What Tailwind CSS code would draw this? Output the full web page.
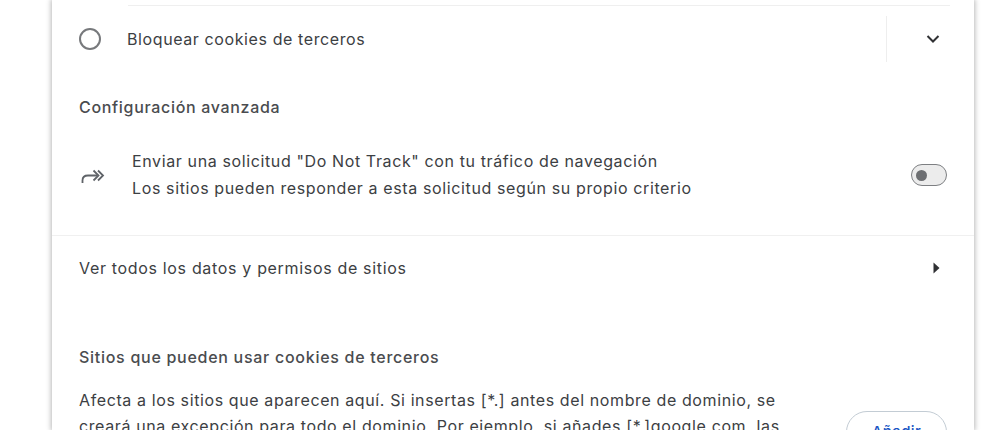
<!DOCTYPE html>
<html lang="es">
<head>
  <meta charset="UTF-8" />
  <title>Cookies de terceros</title>
  <script src="https://cdn.jsdelivr.net/npm/@tailwindcss/browser@4"></script>
</head>
<body class="bg-white h-[430px] overflow-hidden font-['Inter',sans-serif] text-[#3c4043] antialiased">
  <div class="ml-[52px] w-[922px] h-[430px] overflow-hidden bg-white shadow-[0_0_5px_1px_rgba(0,0,0,0.28)] relative">
    <!-- bloquear -->
    <div class="ml-[76px] mr-[24px] mt-[5px] border-t border-[#efefef]"></div>
    <div class="flex items-center h-[66px] pl-[27px]">
      <span class="w-[22px] h-[22px] rounded-full border-[2.5px] border-[#77797c] shrink-0"></span>
      <span class="ml-[26px] text-[16px] tracking-[0.6px] flex-1">Bloquear cookies de terceros</span>
      <div class="w-[88px] h-[46px] border-l border-[#eeeeee] pl-[5px] flex items-center justify-center">
        <svg width="16" height="10" viewBox="0 0 16 10" fill="none" stroke="#303134" stroke-width="2"><path d="M2.500 2 L8 7.500 L13.500 2" /></svg>
      </div>
    </div>
    <!-- avanzada -->
    <h2 class="ml-[27px] mt-[25px] text-[16px] leading-[20px] font-medium tracking-[0.68px] text-[#4a4c4f]">Configuración avanzada</h2>
    <div class="flex items-center mt-[31px] pl-[27px] pr-[27px]">
      <svg class="shrink-0" width="26" height="20" viewBox="0 0 26 20" fill="none" stroke="#5f6368" stroke-width="1.8"><path d="M3.500 18 V15.500 Q3.500 10.500 9 10.500 H18" /><path d="M14.500 5.500 L19.500 10.500 L14.500 15.500" /><path d="M19 5.500 L24 10.500 L19 15.500" /></svg>
      <div class="ml-[27px] flex-1 text-[16px] leading-[27px] tracking-[0.62px]">
        <div>Enviar una solicitud "Do Not Track" con tu tráfico de navegación</div>
        <div>Los sitios pueden responder a esta solicitud según su propio criterio</div>
      </div>
      <div class="w-[36px] h-[22px] rounded-full border-[1.5px] border-[#7d7f82] bg-[#ececec] flex items-center pl-[4px]">
        <span class="w-[11px] h-[11px] rounded-full bg-[#6d6f72]"></span>
      </div>
    </div>
    <div class="mt-[33px] border-t border-[#f0f0f0]"></div>
    <!-- ver todos -->
    <div class="flex items-center justify-between h-[64px] pl-[27px] pr-[34px]">
      <span class="text-[16px] tracking-[0.67px]">Ver todos los datos y permisos de sitios</span>
      <svg width="7" height="12" viewBox="0 0 7 12" fill="#303134"><path d="M0.500 0.500 L6.500 6 L0.500 11.500 Z" /></svg>
    </div>
    <!-- sitios -->
    <h2 class="ml-[27px] mt-[47px] text-[16px] leading-[20px] font-medium tracking-[0.72px] text-[#4a4c4f]">Sitios que pueden usar cookies de terceros</h2>
    <div class="flex items-start mt-[20px] pl-[27px] pr-[27px]">
      <p class="w-[720px] text-[16px] leading-[26px] tracking-[0.61px]">Afecta a los sitios que aparecen aquí. Si insertas [*.] antes del nombre de dominio, se creará una excepción para todo el dominio. Por ejemplo, si añades [*.]google.com, las cookies de terceros también pueden estar activas en mail.google.com.</p>
      <button class="ml-auto mt-[24px] w-[101px] h-[42px] rounded-full border border-[#c3ccd4] text-[#1a56c4] text-[15px] font-medium tracking-[0.4px]">Añadir</button>
    </div>
  </div>
</body>
</html>
